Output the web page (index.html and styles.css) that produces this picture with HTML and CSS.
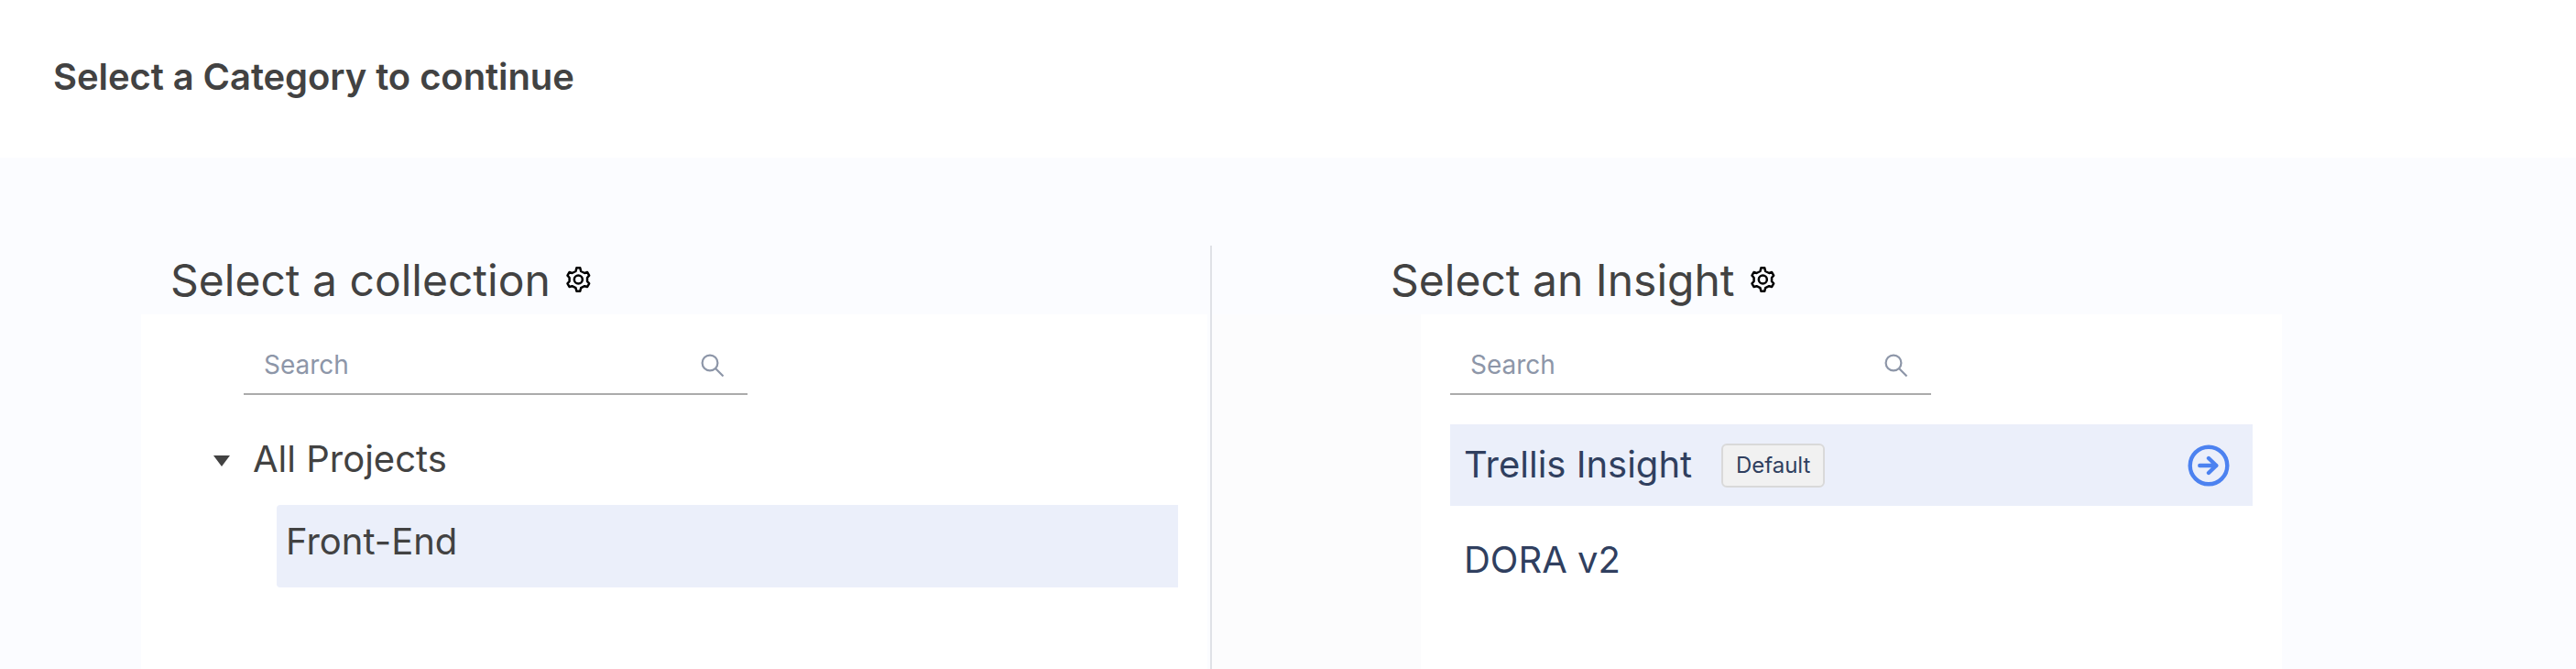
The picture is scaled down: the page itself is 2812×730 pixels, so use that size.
FILE: index.html
```html
<!DOCTYPE html>
<html lang="en">
<head>
<meta charset="utf-8">
<title>Select a Category</title>
<link rel="stylesheet" href="styles.css">
</head>
<body>
<svg class="defs" aria-hidden="true">
  <symbol id="gear" viewBox="0 0 28.66 30">
    <path d="M12.4 2.3h3.86l.9 3.7 4 2 3-1 2 3.6-2.1 2.4v4l2.1 2.4-2 3.6-3-.8-4 2-.9 3.5H12.4l-.9-3.5-4-2-3 .8-2-3.6L4.6 17v-4l-2.1-2.4 2-3.6 3 1 4-2z"/>
    <circle cx="14.33" cy="15" r="4.5"/>
  </symbol>
  <symbol id="search" viewBox="0 0 26 26">
    <circle cx="10" cy="10" r="8.4"/>
    <path d="M16 16l8.5 8.5"/>
  </symbol>
</svg>
<header class="header"><h1 class="title">Select a Category to continue</h1></header>
<main class="main">
  <section class="collections">
    <h2 class="heading heading-left">Select a collection <svg class="gear"><use href="#gear"/></svg></h2>
    <div class="panel panel-left">
      <div class="search search-left"><span>Search</span><svg class="search-icon"><use href="#search"/></svg></div>
      <div class="tree-root"><span class="caret"></span>All Projects</div>
      <div class="tree-item">Front-End</div>
    </div>
  </section>
  <section class="insights">
    <h2 class="heading heading-right">Select an Insight <svg class="gear"><use href="#gear"/></svg></h2>
    <div class="panel-wrap">
      <div class="panel panel-right">
        <div class="search search-right"><span>Search</span><svg class="search-icon"><use href="#search"/></svg></div>
        <div class="insight selected">
          <span class="insight-name">Trellis Insight</span>
          <span class="badge">Default</span>
          <svg class="go" viewBox="0 0 46 46"><circle cx="23" cy="23" r="20.3"/><path d="M13.3 23h18M23 15l8.3 8-8.3 8"/></svg>
        </div>
        <div class="insight"><span class="insight-name">DORA v2</span></div>
      </div>
    </div>
  </section>
</main>
</body>
</html>
```
FILE: styles.css
```css
* { box-sizing: border-box; }
body {
  margin: 0;
  height: 730px;
  display: flex;
  flex-direction: column;
  overflow: hidden;
  font-family: Inter, "Liberation Sans", sans-serif;
  color: #424242;
  background: #fff;
}
.defs { display: none; }
svg { flex: none; fill: none; }
.header { height: 172px; padding: 60px 58px 0; }
.title { margin: 0; font-size: 40px; line-height: 48px; font-weight: 600; letter-spacing: -0.08px; white-space: nowrap; }
.main {
  flex: 1;
  display: flex;
  padding: 96px 0 0 154px;
  background: #fbfcff;
}
.collections {
  width: 1169px;
  display: flex;
  flex-direction: column;
  padding-right: 3px;
  border-right: 2px solid #dfe1e6;
}
.insights { flex: 1; display: flex; flex-direction: column; }
.heading {
  display: flex;
  align-items: center;
  gap: 16px;
  height: 75px;
  margin: 0;
  font-size: 48px;
  font-weight: 400;
  white-space: nowrap;
}
.heading-left { padding-left: 32px; }
.heading-right { padding-left: 195px; }
.gear { width: 28.66px; height: 30px; margin-bottom: 1px; stroke: #000; stroke-width: 2.5; stroke-linejoin: round; }
.panel { background: #fff; padding-top: 24px; flex: 1; }
.panel-wrap {
  width: 1168px;
  flex: 1;
  display: flex;
  padding-left: 228px;
  background: #fcfcfd;
}
.panel-right { padding-left: 32px; padding-right: 32px; }
.search {
  display: flex;
  align-items: center;
  justify-content: space-between;
  height: 64px;
  padding: 0 25px 0 22px;
  border-bottom: 2px solid #ababab;
  font-size: 28px;
  color: #8d96a8;
}
.search-left { width: 550px; margin-left: 112px; }
.search-right { width: 525px; margin-bottom: 32px; }
.search-icon { width: 26px; height: 26px; margin-top: 2px; stroke: #8d96a8; stroke-width: 2.2; }
.tree-root {
  display: flex;
  align-items: center;
  gap: 25px;
  height: 90px;
  margin-top: 24px;
  padding-left: 79px;
  font-size: 40px;
}
.caret {
  border: 9px solid transparent;
  border-top: 12px solid #424242;
  border-bottom: 0;
  margin-top: 5px;
}
.tree-item {
  height: 90px;
  margin: 6px 32px 0 148px;
  padding-left: 10px;
  border-radius: 4px 0 0 4px;
  background: #ebeffa;
  font-size: 40px;
  line-height: 79px;
}
.insight {
  display: flex;
  align-items: center;
  height: 89px;
  margin-bottom: 15px;
  padding: 0 25px 0 15px;
  font-size: 40px;
  color: #303f5f;
}
.selected { background: #ebeffa; }
.insight-name { line-height: 48px; margin-bottom: 2px; }
.badge {
  margin-left: 32px;
  width: 113px;
  height: 48px;
  border: 2px solid #d9d9d9;
  border-radius: 6px;
  background: #f1f1f1;
  font-size: 24px;
  line-height: 43px;
  text-align: center;
}
.go {
  width: 46px;
  height: 46px;
  margin-left: auto;
  stroke: #4c82f0;
  stroke-width: 4.4;
  stroke-linecap: round;
  stroke-linejoin: round;
}
```
